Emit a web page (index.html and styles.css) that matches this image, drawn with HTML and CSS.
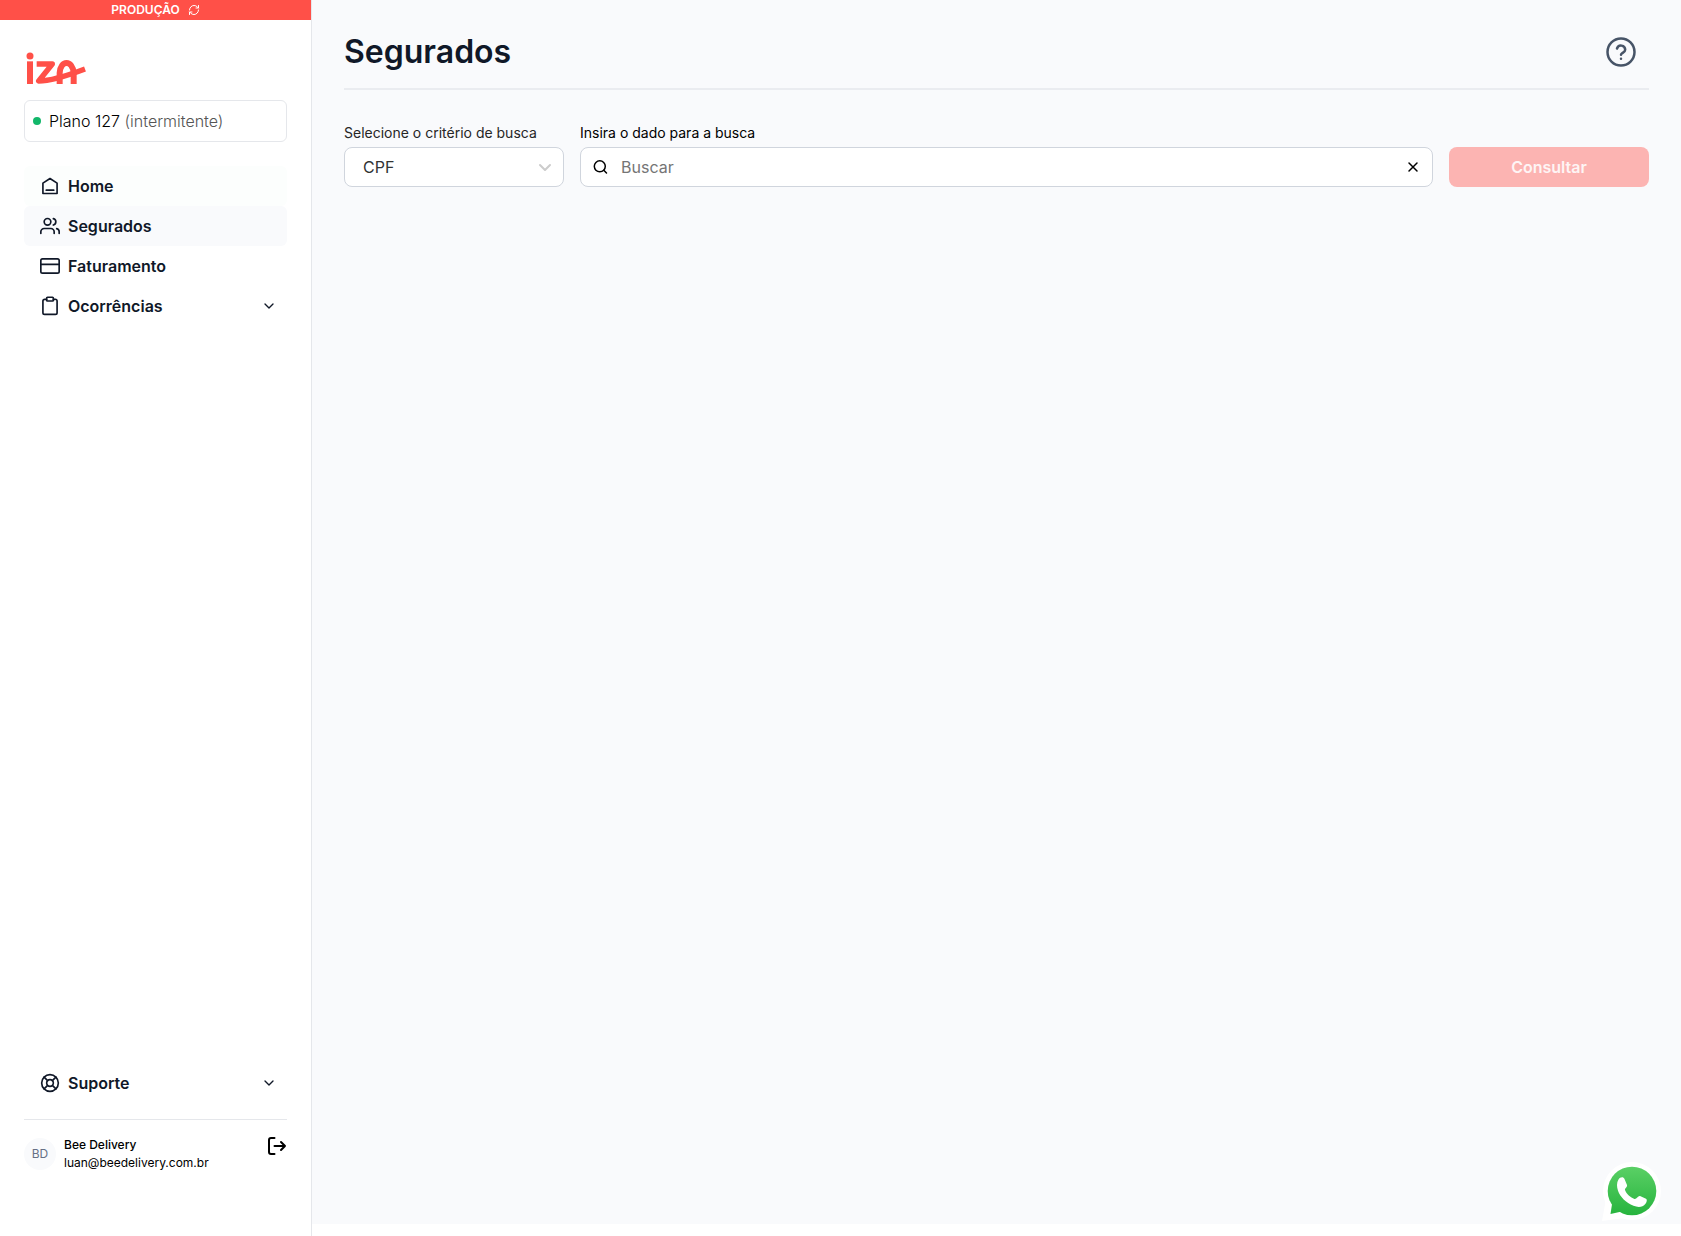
FILE: index.html
```html
<!DOCTYPE html>
<html lang="pt-BR">
<head>
<meta charset="utf-8">
<meta name="viewport" content="width=device-width, initial-scale=1">
<title>Segurados</title>
<link rel="stylesheet" href="styles.css">
</head>
<body>
<div class="app">
  <aside class="sidebar">
    <button class="environment" type="button">
      PRODUÇÃO
      <svg class="environment-icon" viewBox="0 0 24 24" aria-hidden="true"><path d="M3 12a9 9 0 0 1 9-9 9.750 9.750 0 0 1 6.740 2.740L21 8M21 3v5h-5M21 12a9 9 0 0 1-9 9 9.750 9.750 0 0 1-6.740-2.740L3 16M8 16H3v5"/></svg>
    </button>
    <div class="sidebar-body">
      <svg class="logo" viewBox="77 155 183 99" role="img" aria-label="iza">
        <circle cx="89" cy="167" r="10.500" fill="#ff5048"/>
        <path d="M89 183V251" stroke-width="18"/>
        <path d="M109 191H156L115 242C145 242 188 231 254 206" stroke-width="16" stroke-linejoin="round"/>
        <path d="M178 251V218C180 178 217 178 220 218V251" stroke-width="18"/>
      </svg>
      <button class="plan" type="button"><span class="plan-dot"></span><span>Plano 127 <span class="plan-type">(intermitente)</span></span></button>
      <nav class="menu">
        <a class="menu-item menu-item-hover" href="#home">
          <svg class="icon" viewBox="0 0 24 24" aria-hidden="true"><path d="M3.500 8.500 12 3l8.500 5.500V21h-17zM7.500 17h9"/></svg>Home</a>
        <a class="menu-item menu-item-active" href="#segurados" aria-current="page">
          <svg class="icon" viewBox="0 0 24 24" aria-hidden="true"><path d="M17 21v-2a4 4 0 0 0-4-4H5a4 4 0 0 0-4 4v2M23 21v-2a4 4 0 0 0-3-3.870M16 3.130a4 4 0 0 1 0 7.750"/><circle cx="9" cy="7" r="4"/></svg>Segurados</a>
        <a class="menu-item" href="#faturamento">
          <svg class="icon" viewBox="0 0 24 24" aria-hidden="true"><rect x="1" y="3.500" width="22" height="17" rx="2"/><path d="M1 10h22"/></svg>Faturamento</a>
        <button class="menu-item" type="button">
          <svg class="icon" viewBox="0 0 24 24" aria-hidden="true"><path d="M16 4h2a2 2 0 0 1 2.500 2v14a2 2 0 0 1-2 2h-13a2 2 0 0 1-2-2V6a2 2 0 0 1 2-2H8"/><rect x="8" y="1.500" width="8" height="4.500" rx="1"/></svg>Ocorrências
          <svg class="chevron" viewBox="0 0 24 24" aria-hidden="true"><path d="m6 9 6 6 6-6"/></svg></button>
      </nav>
      <div class="sidebar-footer">
        <button class="menu-item" type="button">
          <svg class="icon" viewBox="0 0 24 24" aria-hidden="true"><circle cx="12" cy="12" r="10"/><circle cx="12" cy="12" r="4"/><path d="m4.930 4.930 4.240 4.240M14.830 9.170l4.240-4.240M14.830 14.830l4.240 4.240M9.170 14.830l-4.240 4.240"/></svg>Suporte
          <svg class="chevron" viewBox="0 0 24 24" aria-hidden="true"><path d="m6 9 6 6 6-6"/></svg></button>
        <div class="account">
          <span class="avatar">BD</span>
          <div class="account-text"><div class="account-name">Bee Delivery</div><div>luan@beedelivery.com.br</div></div>
          <button class="logout" type="button" aria-label="Sair">
            <svg class="logout-icon" viewBox="0 0 20 20" aria-hidden="true"><path d="M7.500 2H4a2 2 0 0 0-2 2v12a2 2 0 0 0 2 2h3.500M7.500 10H18M14 6l4 4-4 4"/></svg>
          </button>
        </div>
      </div>
    </div>
  </aside>
  <main class="main">
    <header class="page-header">
      <h1 class="page-title">Segurados</h1>
      <button class="help" type="button" aria-label="Ajuda">
        <svg class="help-icon" viewBox="0 0 32 32" aria-hidden="true"><circle cx="16" cy="16" r="13.500"/><path d="M12 12.500a4.200 4.200 0 0 1 8.200 1.200c0 2.800-4.200 3.300-4.200 5M16 22.700v.1"/></svg>
      </button>
    </header>
    <form class="search">
      <div class="field">
        <label class="field-label field-label-muted" for="criterion">Selecione o critério de busca</label>
        <div class="control">
          <select class="select" id="criterion"><option>CPF</option></select>
          <svg class="select-chevron" viewBox="0 0 14 14" aria-hidden="true"><path d="m2 5 5 5 5-5"/></svg>
        </div>
      </div>
      <div class="field">
        <label class="field-label" for="query">Insira o dado para a busca</label>
        <div class="control text-control">
          <svg class="search-icon" viewBox="0 0 16 16" aria-hidden="true"><circle cx="6.800" cy="7.300" r="5.500"/><path d="m10.800 11.300 2.700 2.700"/></svg>
          <input class="input" id="query" type="text" placeholder="Buscar">
          <button class="clear" type="button" aria-label="Limpar"><svg class="clear-icon" viewBox="0 0 14 14" aria-hidden="true"><path d="m3 3 8 8M11 3l-8 8"/></svg></button>
        </div>
      </div>
      <button class="submit" type="submit" disabled>Consultar</button>
    </form>
  </main>
</div>
<a class="whatsapp" href="#whatsapp" aria-label="WhatsApp">
  <svg class="whatsapp-icon" viewBox="0 0 64 64" aria-hidden="true">
    <defs><linearGradient id="green" gradientUnits="userSpaceOnUse" x1="0" y1="6" x2="0" y2="55"><stop offset="0" stop-color="#5bd066"/><stop offset="1" stop-color="#27b43e"/></linearGradient></defs>
    <g fill="#fff"><circle cx="32" cy="31" r="29"/><path d="M2 61 6 39 24 58z"/></g>
    <g fill="url(#green)"><circle cx="32" cy="31" r="24.300"/><path d="M10.500 54 12.500 41 24 51z"/></g>
    <path d="M18.500 19.500c1.500-2.500 5-3 6-.5l2.500 6c.6 2-2.500 3.500-2 5 1.500 4 5.500 7.500 9.500 9 2 .5 3.500-3.500 5.500-3l6 2.800c1.300.7 1 3-.5 5-3 3.700-7.500 3.700-12 2-7.500-3-13.500-9-15.500-15-1.300-4-1.500-8 .5-11.300z" fill="#fff"/>
  </svg>
</a>
</body>
</html>
```
FILE: styles.css
```css
* { box-sizing: border-box; }

body {
  margin: 0;
  background: #fff;
  color: #000;
  font: 400 16px/24px Inter, "Liberation Sans", sans-serif;
}

button, input, select { font: inherit; color: inherit; margin: 0; }
button { padding: 0; border: 0; background: none; cursor: pointer; }
a { color: inherit; text-decoration: none; }

svg {
  display: block;
  flex: none;
  fill: none;
  stroke: currentColor;
  stroke-width: 2;
  stroke-linecap: round;
  stroke-linejoin: round;
}

.app { display: flex; min-height: 100vh; }

.sidebar {
  display: flex;
  flex-direction: column;
  flex: none;
  width: 312px;
  border-right: 1px solid #e5e7eb;
}

.environment {
  display: flex;
  align-items: center;
  justify-content: center;
  gap: 8px;
  height: 20px;
  background: #ff5048;
  color: #fff;
  font-size: 12px;
  font-weight: 600;
}
.environment-icon { width: 12px; height: 12px; }

.sidebar-body {
  display: flex;
  flex-direction: column;
  flex: 1;
  padding: 32px 24px 64px;
}

.logo {
  width: 61px;
  height: 33px;
  margin: 0 0 15px 2px;
  stroke: #ff5048;
  stroke-linecap: butt;
}
.logo circle { stroke: none; }

.plan {
  display: flex;
  align-items: center;
  gap: 8px;
  height: 42px;
  padding: 0 8px;
  border: 1px solid #e5e7eb;
  border-radius: 6px;
  font-weight: 300;
  text-align: left;
}
.plan-dot { width: 8px; height: 8px; border-radius: 50%; background: #12b76a; }
.plan-type { color: #555; }

.menu { margin-top: 24px; }

.menu-item {
  display: flex;
  align-items: center;
  gap: 8px;
  width: 100%;
  height: 40px;
  padding: 0 10px 0 16px;
  border-radius: 6px;
  color: #101828;
  font-weight: 600;
}
.menu-item-hover { background: #fcfefd; }
.menu-item-active { background: #f9fafc; }
.icon { width: 20px; height: 20px; }
.chevron { width: 16px; height: 16px; margin-left: auto; }

.sidebar-footer { margin-top: auto; }

.account {
  display: flex;
  gap: 8px;
  margin-top: 16px;
  padding-top: 16px;
  border-top: 1px solid #e5e7eb;
  font-size: 12px;
  line-height: 18px;
}
.avatar {
  display: flex;
  align-items: center;
  justify-content: center;
  width: 32px;
  height: 32px;
  margin-top: 2px;
  border-radius: 50%;
  background: #f9fafc;
  color: #667085;
}
.account-name { font-weight: 500; }
.logout { align-self: flex-start; margin-left: auto; }
.logout-icon { width: 20px; height: 20px; }

.main {
  flex: 1;
  min-width: 0;
  margin-bottom: 12px;
  padding: 32px;
  background: #f9fafc;
}

.page-header {
  display: flex;
  align-items: center;
  justify-content: space-between;
  padding: 0 12px 16px 0;
  border-bottom: 2px solid #eaecf0;
}
.page-title {
  margin: 0;
  color: #101828;
  font-size: 32px;
  font-weight: 600;
  line-height: 40px;
}
.help { color: #475467; }
.help-icon { width: 32px; height: 32px; stroke-width: 2.5; }

.search {
  display: grid;
  grid-template-columns: 220px 1fr 200px;
  align-items: end;
  gap: 16px;
  margin-top: 32px;
}
.field-label {
  display: block;
  margin-bottom: 3px;
  font-size: 14px;
  line-height: 22px;
}
.field-label-muted { color: #262626; }

.control { position: relative; }
.select {
  display: block;
  width: 100%;
  height: 40px;
  padding: 0 18px;
  appearance: none;
  border: 1px solid #d0d5dd;
  border-radius: 8px;
  background: #fff;
  color: #333;
}
.select-chevron {
  position: absolute;
  top: 13px;
  right: 12px;
  width: 14px;
  height: 14px;
  color: #ccc;
  pointer-events: none;
}

.text-control {
  display: flex;
  align-items: center;
  gap: 12px;
  height: 40px;
  padding: 0 12px;
  border: 1px solid #d0d5dd;
  border-radius: 8px;
  background: #fff;
}
.search-icon { width: 16px; height: 16px; }
.input {
  flex: 1;
  min-width: 0;
  padding: 0;
  border: 0;
  outline: 0;
  background: none;
}
.input::placeholder { color: #757575; opacity: 1; }
.clear-icon { width: 14px; height: 14px; }

.search-icon, .clear-icon { stroke-width: 1.5; }

.submit {
  height: 40px;
  border-radius: 8px;
  background: #fcb4b2;
  color: #fef5f5;
  font-weight: 600;
}

.whatsapp { position: fixed; right: 17px; bottom: 12px; }
.whatsapp-icon { width: 64px; height: 64px; stroke: none; }
```
